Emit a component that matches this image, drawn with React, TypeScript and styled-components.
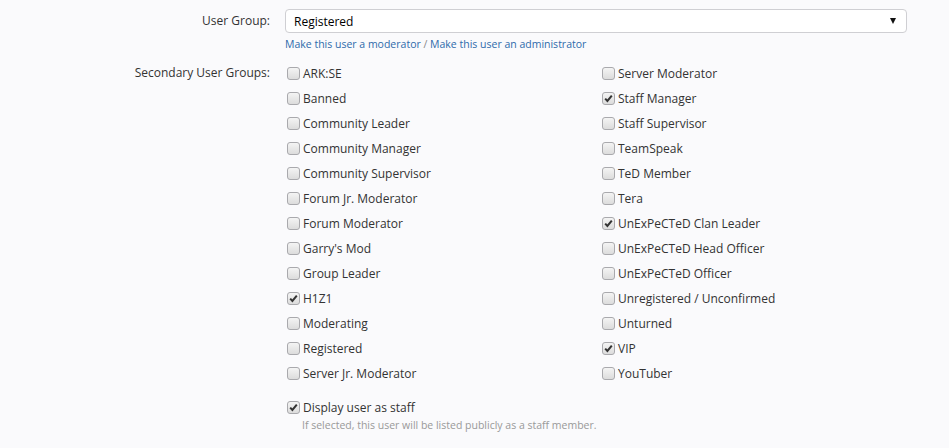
import React from 'react'
import styled, { createGlobalStyle } from 'styled-components'

const leftGroups = [
  { name: 'ARK:SE' },
  { name: 'Banned' },
  { name: 'Community Leader' },
  { name: 'Community Manager' },
  { name: 'Community Supervisor' },
  { name: 'Forum Jr. Moderator' },
  { name: 'Forum Moderator' },
  { name: "Garry's Mod" },
  { name: 'Group Leader' },
  { name: 'H1Z1', checked: true },
  { name: 'Moderating' },
  { name: 'Registered' },
  { name: 'Server Jr. Moderator' },
]

const rightGroups = [
  { name: 'Server Moderator' },
  { name: 'Staff Manager', checked: true },
  { name: 'Staff Supervisor' },
  { name: 'TeamSpeak' },
  { name: 'TeD Member' },
  { name: 'Tera' },
  { name: 'UnExPeCTeD Clan Leader', checked: true },
  { name: 'UnExPeCTeD Head Officer' },
  { name: 'UnExPeCTeD Officer' },
  { name: 'Unregistered / Unconfirmed' },
  { name: 'Unturned' },
  { name: 'VIP', checked: true },
  { name: 'YouTuber' },
]

const GlobalStyle = createGlobalStyle`
  body {
    margin: 0;
    background: #fafafc;
    font-family: "Open Sans", "DejaVu Sans", sans-serif;
    font-size: 12px;
    color: #333;
  }
`

const CheckBox: React.FC<{ checked?: boolean }> = ({ checked }) => (
  <StyledBox>
    {checked && (
      <svg width="11" height="11" viewBox="0 0 11 11">
        <path d="M2.2 5.6 L4.4 8 L8.8 2.6" fill="none" stroke="#333" strokeWidth="2" />
      </svg>
    )}
  </StyledBox>
)

const Check: React.FC<{ name: string; checked?: boolean }> = ({ name, checked }) => (
  <StyledCheck>
    <CheckBox checked={checked} />
    <span>{name}</span>
  </StyledCheck>
)

const App: React.FC = () => {
  const rows = leftGroups.flatMap((g, i) => [g, rightGroups[i]])

  return (
    <>
      <GlobalStyle />
      <StyledForm>
        <StyledRow>
          <StyledLabel>User Group:</StyledLabel>
          <StyledField>
            <StyledSelect>
              <span>Registered</span>
              <StyledArrow />
            </StyledSelect>
            <StyledLinks>
              <a>Make this user a moderator</a>
              <StyledSep> / </StyledSep>
              <a>Make this user an administrator</a>
            </StyledLinks>
          </StyledField>
        </StyledRow>
        <StyledRow>
          <StyledLabel>Secondary User Groups:</StyledLabel>
          <StyledField>
            <StyledGrid>
              {rows.map((g) => (
                <Check key={g.name} name={g.name} checked={g.checked} />
              ))}
            </StyledGrid>
            <StyledStaff>
              <Check name="Display user as staff" checked />
              <StyledHint>If selected, this user will be listed publicly as a staff member.</StyledHint>
            </StyledStaff>
          </StyledField>
        </StyledRow>
      </StyledForm>
    </>
  )
}

const StyledForm = styled.div`
  padding-top: 9px;
  display: flex;
  flex-direction: column;
  gap: 10px;
`

const StyledRow = styled.div`
  display: grid;
  grid-template-columns: 270px 622px;
  column-gap: 15px;
`

const StyledLabel = styled.div`
  text-align: right;
  line-height: 24px;
  color: #333;
`

const StyledField = styled.div``

const StyledSelect = styled.div`
  height: 24px;
  box-sizing: border-box;
  border: 1px solid #cfcfd3;
  border-radius: 4px;
  background: #fff;
  display: flex;
  align-items: center;
  justify-content: space-between;
  padding: 0 8px;
  color: #000;
  font-size: 12px;
`

const StyledArrow = styled.span`
  width: 0;
  height: 0;
  border-left: 3px solid transparent;
  border-right: 3px solid transparent;
  border-top: 6px solid #111;
  margin-right: 2px;
`

const StyledLinks = styled.div`
  margin-top: 4px;
  font-size: 10.5px;
  line-height: 14px;

  a {
    color: #2e6aab;
    cursor: pointer;
  }
`

const StyledSep = styled.span`
  color: #888;
`

const StyledGrid = styled.div`
  display: grid;
  grid-template-columns: 315px 315px;
  grid-auto-rows: 25px;
`

const StyledCheck = styled.label`
  display: flex;
  align-items: center;
  gap: 3px;
  padding-left: 2px;
  color: #333;
  white-space: nowrap;
`

const StyledBox = styled.span`
  width: 13px;
  height: 13px;
  box-sizing: border-box;
  border: 1px solid #a9a9ad;
  border-radius: 3px;
  background: linear-gradient(#f4f4f4, #dcdcdc);
  display: flex;
  align-items: center;
  justify-content: center;
`

const StyledHint = styled.div`
  font-size: 10.5px;
  color: #999;
  padding-left: 17px;
  margin-top: 2px;
`

const StyledStaff = styled.div`
  margin-top: 13px;
`

export default App
